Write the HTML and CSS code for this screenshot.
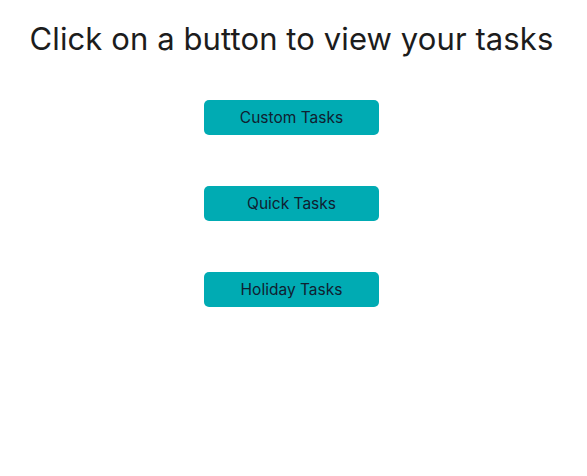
FILE: index.html
```html
<!DOCTYPE html>
<html lang="en">
<head>
<meta charset="utf-8">
<title>Tasks</title>
<link rel="stylesheet" href="styles.css">
</head>
<body>
<main class="page">
  <h1 class="title">Click on a button to view your tasks</h1>
  <div class="buttons">
    <button class="task-btn">Custom Tasks</button>
    <button class="task-btn">Quick Tasks</button>
    <button class="task-btn">Holiday Tasks</button>
  </div>
</main>
</body>
</html>
```

FILE: styles.css
```css
html, body {
  margin: 0;
  padding: 0;
  background: #ffffff;
}
.page {
  font-family: "Inter", "Noto Sans", sans-serif;
  color: #1c1c1c;
  display: flex;
  flex-direction: column;
  align-items: center;
  padding: 20px 4px 0 0;
}
.title {
  margin: 0;
  font-size: 31px;
  font-weight: 400;
  line-height: 38px;
  letter-spacing: 0.1px;
}
.buttons {
  display: flex;
  flex-direction: column;
  align-items: center;
  gap: 51px;
  margin-top: 42px;
}
.task-btn {
  width: 175px;
  height: 35px;
  border: none;
  border-radius: 5px;
  background: #00abb3;
  color: #102030;
  font-family: "Inter", "Noto Sans", sans-serif;
  font-size: 15.5px;
  font-weight: 400;
  padding: 0;
}
```
